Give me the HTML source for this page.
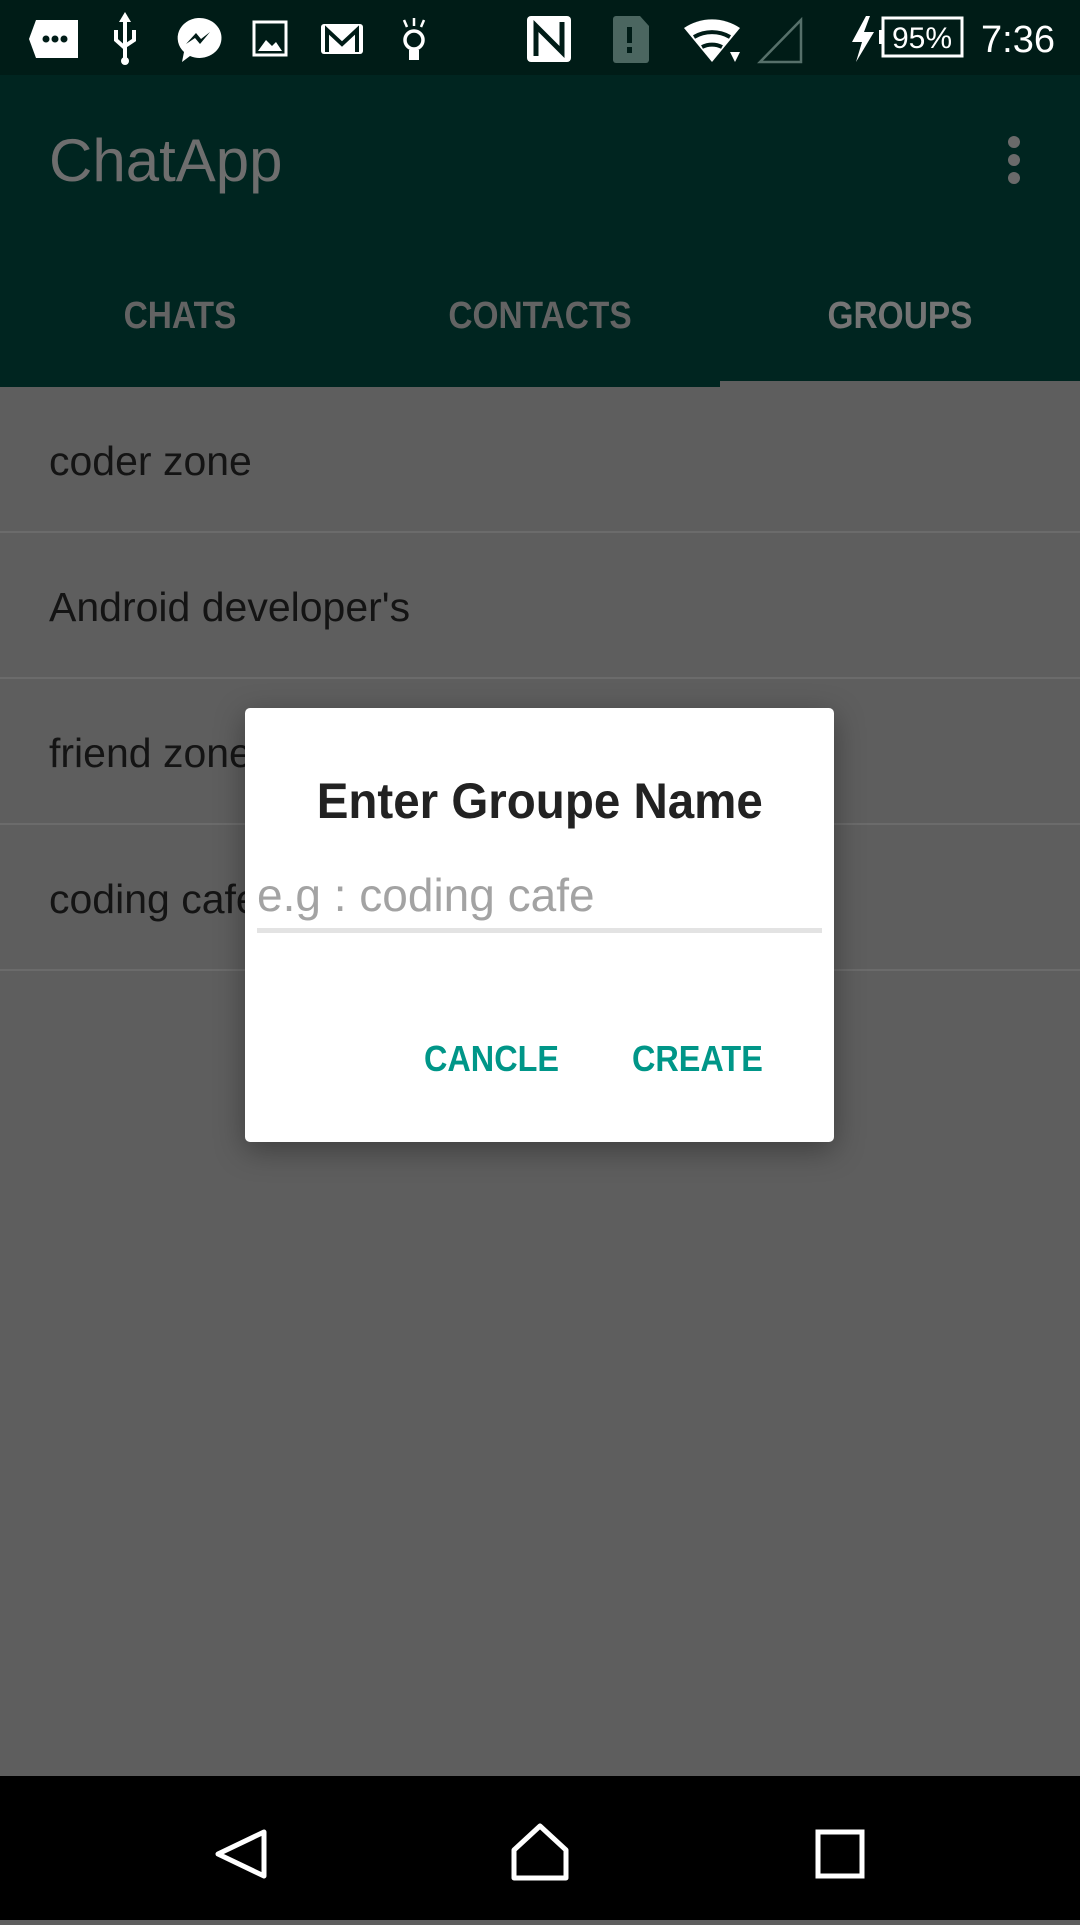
<!DOCTYPE html>
<html><head><meta charset="utf-8"><style>
*{margin:0;padding:0;box-sizing:border-box}
body{width:1080px;height:1920px;overflow:hidden;background:#5e5e5e;font-family:"Liberation Sans",sans-serif;position:relative}
.abs{position:absolute}
.status{left:0;top:0;width:1080px;height:75px;background:#001c17}
.appbar{left:0;top:75px;width:1080px;height:312px;background:#002520}
.title{left:49px;top:131px;font-size:60px;color:#6e6e6e;line-height:60px}
.tab{top:296px;font-size:38px;color:#636363;font-weight:bold;line-height:40px;text-align:center;width:360px;transform:scaleX(.88)}
.ind{left:720px;top:381px;width:360px;height:6px;background:#5e5e5e}
.row{left:0;width:1080px;height:146px;border-bottom:2px solid #6b6b6b}
.row span{position:absolute;left:49px;top:50%;transform:translateY(-45%);font-size:41px;color:#141414}
.dlg{left:245px;top:708px;width:589px;height:434px;background:#fff;border-radius:5px;box-shadow:0 8px 30px rgba(0,0,0,.35)}
.dt{left:0;width:589px;top:64px;text-align:center;font-size:50px;font-weight:bold;color:#222}
.dt span{display:inline-block;transform:scaleX(.95)}
.ph{left:12px;top:160px;font-size:46px;color:#a3a3a3}
.ul{left:12px;top:220px;width:565px;height:5px;background:#e3e3e3}
.btn{top:330px;font-size:36px;font-weight:bold;color:#009688;transform:scaleX(.9);transform-origin:left}
.nav{left:0;top:1776px;width:1080px;height:144px;background:#000}
</style></head><body>
<div class="abs status">
<svg width="1080" height="75" viewBox="0 0 1080 75">
 <g fill="#fff">
  <path d="M36 20 H78 V58 H36 L29 39 Z"/>
 </g>
 <g fill="#001c17"><circle cx="46" cy="39" r="3.5"/><circle cx="55" cy="39" r="3.5"/><circle cx="64" cy="39" r="3.5"/></g>
 <g stroke="#fff" stroke-width="4" fill="none">
  <path d="M125 18 V60 M116 30 V40 L125 48 M134 30 V40 L125 46"/>
 </g>
 <circle cx="125" cy="61" r="4" fill="#fff"/>
 <path d="M125 12 L119 22 H131 Z" fill="#fff"/>
 <path d="M198 18 a22 20 0 1 1 -8 38 L182 62 L184 52 A22 20 0 0 1 198 18 Z" fill="#fff"/>
 <path d="M186 44 L196 33 L201 39 L210 32 L200 44 L195 38 Z" fill="#001c17"/>
 <rect x="254" y="22" width="32" height="33" fill="none" stroke="#fff" stroke-width="3"/>
 <path d="M258 51 L266 40 L272 46 L276 42 L282 51 Z" fill="#fff"/>
 <rect x="321" y="24" width="42" height="30" rx="3" fill="#fff"/>
 <path d="M327 52 V30 L342 44 L357 30 V52" fill="none" stroke="#001c17" stroke-width="4"/>
 <circle cx="414" cy="40" r="9" fill="none" stroke="#fff" stroke-width="3.5"/>
 <path d="M409 50 h10 v10 h-10z" fill="#fff"/>
 <path d="M414 18 v8 M404 20 l3 7 M424 20 l-3 7" stroke="#fff" stroke-width="2.5"/>
 <rect x="527" y="16" width="44" height="46" rx="4" fill="#fff"/>
 <path d="M536 56 V26 L562 52 V22" fill="none" stroke="#001c17" stroke-width="5"/>
 <path d="M616 16 H640 L649 26 V60 a3 3 0 0 1 -3 3 H616 a3 3 0 0 1 -3 -3 V19 a3 3 0 0 1 3 -3Z" fill="#4b6660"/>
 <rect x="627" y="27" width="5" height="16" fill="#001c17"/><rect x="627" y="47" width="5" height="6" fill="#001c17"/>
 <path d="M684 28 A50 50 0 0 1 740 28 L712 62 Z" fill="#fff"/>
 <path d="M694 37 A36 36 0 0 1 730 37" stroke="#001c17" stroke-width="4" fill="none"/>
 <path d="M702 47 A22 22 0 0 1 722 47" stroke="#001c17" stroke-width="4" fill="none"/>
 <path d="M730 52 L740 52 L735 62 Z" fill="#fff"/>
 <path d="M760 62 L801 20 V62 Z" fill="none" stroke="#56706a" stroke-width="2.5"/>
 <path d="M866 16 L852 42 H862 L856 62 L874 32 H864 L870 16 Z" fill="#fff"/>
 <rect x="883" y="18" width="79" height="38" fill="none" stroke="#fff" stroke-width="3"/>
 <rect x="879" y="30" width="5" height="14" fill="#fff"/>
 <text x="922" y="48" font-size="30" fill="#fff" text-anchor="middle" font-family="Liberation Sans">95%</text>
 <text x="1055" y="52" font-size="38" fill="#fff" text-anchor="end" font-family="Liberation Sans">7:36</text>
</svg>
</div>
<div class="abs appbar"></div>
<div class="abs title">ChatApp</div>
<svg class="abs" style="left:1000px;top:134px" width="28" height="52"><circle cx="14" cy="8" r="6" fill="#6a6a6a"/><circle cx="14" cy="26" r="6" fill="#6a6a6a"/><circle cx="14" cy="44" r="6" fill="#6a6a6a"/></svg>
<div class="abs tab" style="left:0">CHATS</div>
<div class="abs tab" style="left:360px">CONTACTS</div>
<div class="abs tab" style="left:720px;color:#747474">GROUPS</div>
<div class="abs ind"></div>
<div class="abs row" style="top:387px"><span>coder zone</span></div>
<div class="abs row" style="top:533px"><span>Android developer's</span></div>
<div class="abs row" style="top:679px"><span>friend zone</span></div>
<div class="abs row" style="top:825px"><span>coding cafe</span></div>
<div class="abs dlg">
 <div class="abs dt"><span>Enter Groupe Name</span></div>
 <div class="abs ph">e.g : coding cafe</div>
 <div class="abs ul"></div>
 <div class="abs btn" style="left:179px">CANCLE</div>
 <div class="abs btn" style="left:387px">CREATE</div>
</div>
<div class="abs nav">
<svg width="1080" height="144">
 <path d="M264 56 L218 78 L264 100 Z" fill="none" stroke="#fff" stroke-width="5" stroke-linejoin="round"/>
 <path d="M514 74 L540 50 L566 74 V102 H514 Z" fill="none" stroke="#fff" stroke-width="5" stroke-linejoin="round"/>
 <rect x="818" y="56" width="44" height="44" fill="none" stroke="#fff" stroke-width="5"/>
</svg>
</div>
</body></html>
